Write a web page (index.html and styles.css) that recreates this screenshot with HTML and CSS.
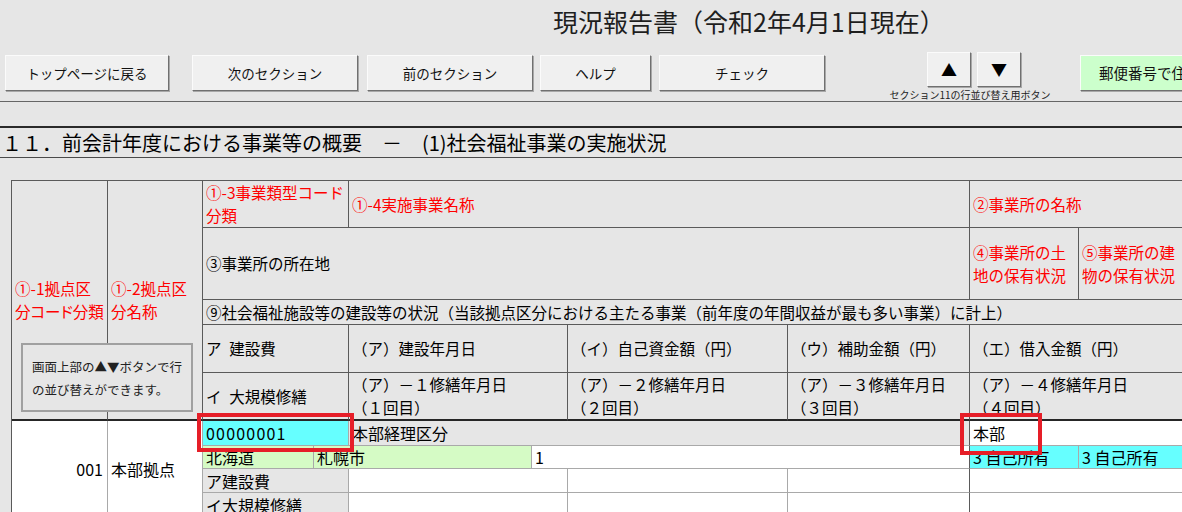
FILE: index.html
```html
<!DOCTYPE html>
<html lang="ja">
<head>
<meta charset="utf-8">
<title>現況報告書</title>
<link rel="stylesheet" href="styles.css">
</head>
<body>
<header class="top">
  <h1 class="title">現況報告書（令和2年4月1日現在）</h1>
  <nav class="toolbar">
    <button class="btn btn-home">トップページに戻る</button>
    <button class="btn btn-next">次のセクション</button>
    <button class="btn btn-prev">前のセクション</button>
    <button class="btn btn-help">ヘルプ</button>
    <button class="btn btn-check">チェック</button>
    <div class="sort">
      <div class="arrows">
        <button class="btn arrow">▲</button>
        <button class="btn arrow">▼</button>
      </div>
      <div class="caption">セクション11の行並び替え用ボタン</div>
    </div>
    <button class="btn btn-zip">郵便番号で住所入力</button>
  </nav>
</header>

<h2 class="section">１１．前会計年度における事業等の概要　－　(1)社会福祉事業の実施状況</h2>

<section class="sheet">
  <div class="grid">
    <div class="cell key req">①-1拠点区<br>分コード分類</div>
    <div class="cell key req">①-2拠点区<br>分名称</div>
    <div class="cell w2 req">①-3事業類型コード<br>分類</div>
    <div class="cell w4 req">①-4実施事業名称</div>
    <div class="cell w2 req">②事業所の名称</div>

    <div class="cell w6">③事業所の所在地</div>
    <div class="cell req">④事業所の土<br>地の保有状況</div>
    <div class="cell req">⑤事業所の建<br>物の保有状況</div>

    <div class="cell w8">⑨社会福祉施設等の建設等の状況（当該拠点区分における主たる事業（前年度の年間収益が最も多い事業）に計上）</div>

    <div class="cell w2">ア&ensp;建設費</div>
    <div class="cell w2">（ア）建設年月日</div>
    <div class="cell">（イ）自己資金額（円）</div>
    <div class="cell">（ウ）補助金額（円）</div>
    <div class="cell w2">（エ）借入金額（円）</div>

    <div class="cell w2 sub">イ&ensp;大規模修繕</div>
    <div class="cell w2 sub">（ア）－１修繕年月日<br>（１回目）</div>
    <div class="cell sub">（ア）－２修繕年月日<br>（２回目）</div>
    <div class="cell sub">（ア）－３修繕年月日<br>（３回目）</div>
    <div class="cell w2 sub">（ア）－４修繕年月日<br>（４回目）</div>

    <div class="cell data entry num">001</div>
    <div class="cell data entry">本部拠点</div>
    <div class="cell data w2 cyan code">00000001</div>
    <div class="cell data w4 gray edge">本部経理区分</div>
    <div class="cell data w2">本部</div>

    <div class="cell data green">北海道</div>
    <div class="cell data w2 green">札幌市</div>
    <div class="cell data w3 edge">1</div>
    <div class="cell data cyan">3 自己所有</div>
    <div class="cell data cyan">3 自己所有</div>

    <div class="cell data w2 gray">ア建設費</div>
    <div class="cell data w2"></div>
    <div class="cell data"></div>
    <div class="cell data edge"></div>
    <div class="cell data w2"></div>

    <div class="cell data w2 gray">イ大規模修繕</div>
    <div class="cell data w2"></div>
    <div class="cell data"></div>
    <div class="cell data edge"></div>
    <div class="cell data w2"></div>
  </div>

  <div class="note">画面上部の▲▼ボタンで行<br>の並び替えができます。</div>
  <div class="mark mark-code"></div>
  <div class="mark mark-name"></div>
</section>
</body>
</html>
```

FILE: styles.css
```css
* {
  box-sizing: border-box;
}

html,
body {
  margin: 0;
  padding: 0;
}

body {
  width: 1182px;
  height: 512px;
  overflow: hidden;
  background: #e6e6e6;
  color: #000;
  font-family: "Noto Sans CJK JP", "Noto Sans", sans-serif;
}

/* ---------- header ---------- */
.title {
  margin: 0;
  height: 52px;
  padding: 3px 0 0 553px;
  font-size: 25px;
  font-weight: 400;
  line-height: 36px;
  color: #1e1e1e;
  white-space: nowrap;
}

.toolbar {
  display: flex;
  align-items: flex-start;
  height: 50px;
  border-bottom: 1px solid #666;
}

.toolbar > * {
  flex-shrink: 0;
}

.btn {
  font: inherit;
  font-size: 13.5px;
  color: #111;
  height: 36px;
  margin: 3px 0 0;
  padding: 0;
  line-height: 34px;
  text-align: center;
  white-space: nowrap;
  background: #f0f0f0;
  border: 1px solid;
  border-color: #fbfbfb #707070 #707070 #fbfbfb;
  box-shadow: 1px 1px 0 #a8a8a8;
}

.btn-home {
  width: 164px;
  margin-left: 5px;
}

.btn-next {
  width: 166px;
  margin-left: 23px;
}

.btn-prev {
  width: 166px;
  margin-left: 9px;
}

.btn-help {
  width: 111px;
  margin-left: 7px;
}

.btn-check {
  width: 166px;
  margin-left: 8px;
}

.sort {
  width: 164px;
  margin-left: 63px;
  display: flex;
  flex-direction: column;
  align-items: center;
}

.arrows {
  align-self: flex-start;
  display: flex;
  gap: 6px;
  margin-left: 39px;
}

.arrow {
  width: 44px;
  height: 35px;
  margin: 0;
  font-size: 16px;
  line-height: 33px;
  color: #000;
}

.caption {
  margin-top: 2px;
  font-size: 10px;
  line-height: 11px;
  white-space: nowrap;
  color: #222;
}

.btn-zip {
  width: 160px;
  margin-left: 28px;
  background: #ccffcc;
  text-align: left;
  padding-left: 18px;
  font-size: 14.5px;
  overflow: hidden;
}

/* ---------- section heading ---------- */
.section {
  margin: 24px 0 0;
  height: 32px;
  border-top: 2px solid #2a2a2a;
  border-bottom: 1px solid #4a4a4a;
  padding-left: 2px;
  font-size: 20px;
  font-weight: 400;
  line-height: 29px;
  white-space: nowrap;
}

/* ---------- sheet ---------- */
.sheet {
  position: relative;
  margin: 22px 0 0 11px;
}

.grid {
  display: grid;
  width: max-content;
  grid-template-columns: 96px 95px 111px 35px 183px 36px 220px 182px 109px 130px;
  grid-template-rows: 47px 72px 25px 48px 48px 25px 23px 24px 24px;
  border-top: 1px solid #5a5a5a;
  border-left: 1px solid #5a5a5a;
}

.cell {
  display: flex;
  align-items: center;
  padding: 0 3px;
  border-right: 1px solid #5a5a5a;
  border-bottom: 1px solid #5a5a5a;
  font-size: 15.5px;
  line-height: 23px;
  white-space: nowrap;
  overflow: hidden;
}

.req {
  color: #ff0000;
}

.key {
  grid-row: span 5;
  border-bottom: 2px solid #262626;
  font-feature-settings: "palt";
}

.sub {
  border-bottom: 2px solid #262626;
}

.w2 {
  grid-column: span 2;
}

.w3 {
  grid-column: span 3;
}

.w4 {
  grid-column: span 4;
}

.w6 {
  grid-column: span 6;
}

.w8 {
  grid-column: span 8;
}

.data {
  background: #fff;
  border-color: #a9a9a9;
  font-size: 16px;
  line-height: 20px;
}

.entry {
  grid-row: span 4;
}

.num {
  justify-content: flex-end;
  padding-right: 4px;
}

.code {
  letter-spacing: 1.2px;
}

.edge {
  border-right-color: #5a5a5a;
}

.gray {
  background: #e6e6e6;
}

.cyan {
  background: #66ffff;
}

.green {
  background: #d5fbc5;
}

/* ---------- overlays ---------- */
.note {
  position: absolute;
  left: 10px;
  top: 163px;
  width: 172px;
  height: 69px;
  padding: 10px 0 0 9px;
  background: #e6e6e6;
  border: 2px solid #a0a0a0;
  font-size: 12.5px;
  line-height: 23px;
  white-space: nowrap;
  color: #222;
}

.mark {
  position: absolute;
  border: 4px solid #e61e28;
}

.mark-code {
  left: 186px;
  top: 233px;
  width: 157px;
  height: 39px;
}

.mark-name {
  left: 949px;
  top: 233px;
  width: 82px;
  height: 42px;
}
```
